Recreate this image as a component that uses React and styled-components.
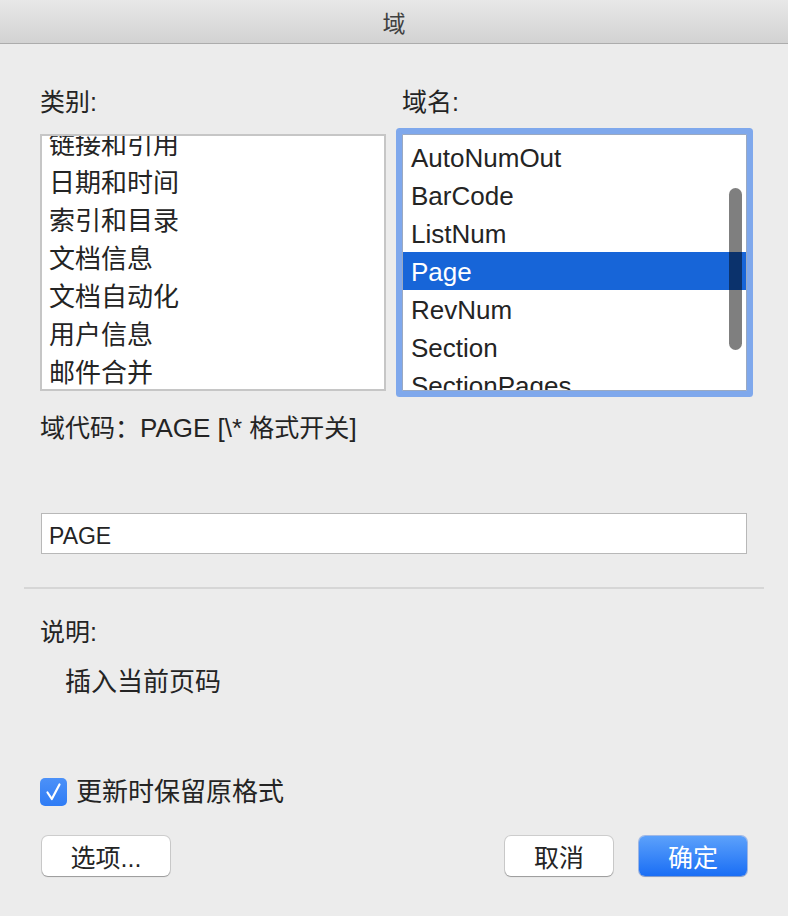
import styled, { createGlobalStyle } from "styled-components";

const GlobalStyle = createGlobalStyle`
  html, body {
    margin: 0;
    padding: 0;
    background: #ececec;
  }
  body {
    font-family: "Liberation Sans", "Noto Sans CJK SC", sans-serif;
    color: #242424;
  }
`;

const Window = styled.div`
  width: 788px;
  height: 916px;
  background: #ececec;
  overflow: hidden;
`;

const TitleBar = styled.div`
  height: 43px;
  border-bottom: 1px solid #acacac;
  background: linear-gradient(#e8e8e8, #d2d2d2);
  display: flex;
  align-items: center;
  justify-content: center;
  font-size: 23px;
  color: #404040;
`;

const Content = styled.div`
  padding: 43px 41px 0 40px;
`;

const Columns = styled.div`
  display: grid;
  grid-template-columns: 346px 345px;
  column-gap: 16px;
  row-gap: 17px;
`;

const Label = styled.div`
  font-size: 25px;
  line-height: 30px;
`;

const ListBox = styled.div`
  position: relative;
  box-sizing: border-box;
  height: 257px;
  background: #fff;
  overflow: hidden;
  border: ${(p) => (p.$focused ? "1px solid #9aa9c2" : "2px solid #c6c6c6")};
  border-radius: ${(p) => (p.$focused ? "1px" : "0")};
  box-shadow: ${(p) => (p.$focused ? "0 0 0 6px #7fa8ec" : "none")};
`;

const Rows = styled.div`
  margin-top: ${(p) => p.$offset}px;
`;

const Row = styled.div`
  box-sizing: border-box;
  height: 38px;
  line-height: 36px;
  padding-top: ${(p) => p.$lift}px;
  padding-left: ${(p) => p.$pad}px;
  font-size: 26px;
  white-space: nowrap;
  background: ${(p) => (p.$selected ? "#1765d8" : "transparent")};
  color: ${(p) => (p.$selected ? "#fff" : "#242424")};
`;

const Thumb = styled.div`
  position: absolute;
  right: 4px;
  top: 53px;
  width: 13px;
  height: 162px;
  border-radius: 7px;
  background: rgba(0, 0, 0, 0.5);
`;

const FieldCode = styled.div`
  margin-top: 22px;
  font-size: 25px;
  line-height: 30px;

  span {
    font-size: 26px;
  }
`;

const TextInput = styled.div`
  margin-top: 70px;
  margin-left: 1px;
  box-sizing: border-box;
  height: 41px;
  border: 1px solid #b8b8b8;
  background: #fff;
  padding: 6px 0 0 7px;
  font-size: 23px;
  line-height: 33px;
`;

const Separator = styled.div`
  margin: 33px -17px 0 -16px;
  height: 2px;
  background: #d6d6d6;
`;

const Description = styled.div`
  margin-top: 28px;
  font-size: 25px;
  line-height: 30px;
`;

const DescriptionText = styled.div`
  margin-top: 20px;
  padding-left: 25px;
  font-size: 26px;
  line-height: 30px;
`;

const CheckRow = styled.label`
  margin-top: 80px;
  display: flex;
  align-items: center;
  gap: 9px;
  font-size: 26px;
  line-height: 30px;
`;

const ButtonRow = styled.div`
  margin-top: 29px;
  display: flex;
  justify-content: space-between;
`;

const ButtonGroup = styled.div`
  display: flex;
  gap: 26px;
`;

const Button = styled.button`
  box-sizing: border-box;
  height: 40px;
  width: ${(p) => p.$width}px;
  margin-left: ${(p) => p.$shift || 0}px;
  border: none;
  border-radius: 6px;
  font-family: "Liberation Sans", "Noto Sans CJK SC", sans-serif;
  font-size: 25px;
  padding: 0;
  color: ${(p) => (p.$primary ? "#fff" : "#242424")};
  background: ${(p) => (p.$primary ? "linear-gradient(#5ca1fb, #1a6ef5)" : "#fff")};
  box-shadow: ${(p) =>
    p.$primary
      ? "0 0 0 1px rgba(20, 90, 220, 0.35), 0 1px 1px rgba(0, 0, 0, 0.2)"
      : "0 0 0 1px rgba(0, 0, 0, 0.13), 0 1px 1px rgba(0, 0, 0, 0.25)"};
`;

const categories = ["链接和引用", "日期和时间", "索引和目录", "文档信息", "文档自动化", "用户信息", "邮件合并"];
const fields = ["AutoNumOut", "BarCode", "ListNum", "Page", "RevNum", "Section", "SectionPages"];

function CheckIcon() {
  return (
    <svg width="27" height="28" viewBox="0 0 27 28">
      <defs>
        <linearGradient id="cb" x1="0" y1="0" x2="0" y2="1">
          <stop offset="0" stopColor="#4c91f8" />
          <stop offset="1" stopColor="#2f7cf5" />
        </linearGradient>
      </defs>
      <rect x="0" y="0" width="27" height="28" rx="5" fill="url(#cb)" />
      <path d="M7.5 14.5 L11.8 21 L19.5 6.5" fill="none" stroke="#fff" strokeWidth="2.2" strokeLinecap="round" strokeLinejoin="round" />
    </svg>
  );
}

export default function App() {
  return (
    <Window>
      <GlobalStyle />
      <TitleBar>域</TitleBar>
      <Content>
        <Columns>
          <Label>类别:</Label>
          <Label>域名:</Label>
          <ListBox>
            <Rows $offset={-10}>
              {categories.map((c) => (
                <Row key={c} $pad={7} $lift={1}>{c}</Row>
              ))}
            </Rows>
          </ListBox>
          <ListBox $focused>
            <Rows $offset={3}>
              {fields.map((f) => (
                <Row key={f} $pad={8} $lift={2} $selected={f === "Page"}>{f}</Row>
              ))}
            </Rows>
            <Thumb />
          </ListBox>
        </Columns>
        <FieldCode>域代码：<span>PAGE [\* </span>格式开关<span>]</span></FieldCode>
        <TextInput>PAGE</TextInput>
        <Separator />
        <Description>说明:</Description>
        <DescriptionText>插入当前页码</DescriptionText>
        <CheckRow>
          <CheckIcon />
          更新时保留原格式
        </CheckRow>
        <ButtonRow>
          <Button $width={128} $shift={2}>选项...</Button>
          <ButtonGroup>
            <Button $width={108}>取消</Button>
            <Button $width={108} $primary>确定</Button>
          </ButtonGroup>
        </ButtonRow>
      </Content>
    </Window>
  );
}
